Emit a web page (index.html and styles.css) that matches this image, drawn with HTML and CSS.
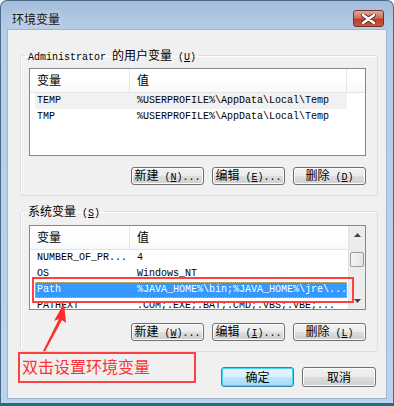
FILE: index.html
```html
<!DOCTYPE html>
<html lang="zh-CN">
<head>
    <meta charset="UTF-8">
    <title>环境变量</title>
    <link rel="stylesheet" href="styles.css">
</head>
<body>
<div class="window">
    <div class="titlebar">
        <span class="title">环境变量</span>
        <span class="close">
            <svg width="15" height="10" viewBox="0 0 15 10"><path d="M2 1 L13 9 M13 1 L2 9" stroke="#5a2a22" stroke-width="4.4" stroke-linecap="round"/><path d="M2 1 L13 9 M13 1 L2 9" stroke="#fff" stroke-width="2.6" stroke-linecap="round"/></svg>
        </span>
    </div>
    <div class="client">
        <fieldset class="group group-user">
            <legend><span class="mono">Administrator </span>的用户变量<span class="mono"> (<u>U</u>)</span></legend>
            <div class="list">
                <div class="list-main">
                    <div class="list-head">
                        <div class="hcell hname">变量</div>
                        <div class="hcell hval">值</div>
                        <div class="hcell hrest"></div>
                    </div>
                    <div class="row hover mono"><span class="cname">TEMP</span><span class="cval">%USERPROFILE%\AppData\Local\Temp</span></div>
                    <div class="row mono"><span class="cname">TMP</span><span class="cval">%USERPROFILE%\AppData\Local\Temp</span></div>
                </div>
            </div>
            <div class="btns">
                <button type="button" class="btn">新建<span class="mono"> (<u>N</u>)...</span></button>
                <button type="button" class="btn">编辑<span class="mono"> (<u>E</u>)...</span></button>
                <button type="button" class="btn">删除<span class="mono"> (<u>D</u>)</span></button>
            </div>
        </fieldset>

        <fieldset class="group group-sys">
            <legend>系统变量<span class="mono"> (<u>S</u>)</span></legend>
            <div class="list list-sys">
                <div class="list-main">
                    <div class="list-head">
                        <div class="hcell hname">变量</div>
                        <div class="hcell hval">值</div>
                    </div>
                    <div class="row mono"><span class="cname">NUMBER_OF_PR...</span><span class="cval">4</span></div>
                    <div class="row mono"><span class="cname">OS</span><span class="cval">Windows_NT</span></div>
                    <div class="row selected mono"><span class="cname">Path</span><span class="cval">%JAVA_HOME%\bin;%JAVA_HOME%\jre\...</span></div>
                    <div class="row mono"><span class="cname">PATHEXT</span><span class="cval">.COM;.EXE;.BAT;.CMD;.VBS;.VBE;...</span></div>
                </div>
                <div class="scrollbar">
                    <div class="sb-btn"><svg width="7" height="4" viewBox="0 0 7 4"><path d="M0 4 L3.5 0 L7 4 Z" fill="#444"/></svg></div>
                    <div class="sb-track"><div class="sb-thumb"></div></div>
                    <div class="sb-btn"><svg width="7" height="4" viewBox="0 0 7 4"><path d="M0 0 L3.5 4 L7 0 Z" fill="#444"/></svg></div>
                </div>
            </div>
            <div class="btns">
                <button type="button" class="btn">新建<span class="mono"> (<u>W</u>)...</span></button>
                <button type="button" class="btn">编辑<span class="mono"> (<u>I</u>)...</span></button>
                <button type="button" class="btn">删除<span class="mono"> (<u>L</u>)</span></button>
            </div>
        </fieldset>

        <div class="dialog-btns">
            <button type="button" class="btn btn-default">确定</button>
            <button type="button" class="btn btn-big">取消</button>
        </div>
    </div>

    <!-- red annotation over the dialog -->
    <div class="mark-row"></div>
    <svg class="arrow" width="40" height="60" viewBox="0 0 40 60">
        <path d="M33 1 L23 19 L28 17 L12 49 L14 49.5 L31 18 L35 21 Z" fill="#ff2d2d"/>
    </svg>
    <div class="note">双击设置环境变量</div>
</div>
</body>
</html>
```

FILE: styles.css
```css
*{
    margin:0;
    padding:0;
}
body{
    background: #fff;
    font-family: "Noto Sans CJK SC", sans-serif;
    font-size: 12px;
    color: #000;
}
.mono{
    font-family: "Liberation Mono", "Noto Sans CJK SC", monospace;
    font-size: 10px;
}
.window{
    position: relative;
    width: 394px;
    height: 406px;
    box-sizing: border-box;
    border: 1px solid #4a6a8c;
    border-bottom: 3px solid #1f6f84;
    border-radius: 7px 7px 0 0;
    background: linear-gradient(#a3bddb, #b6cde8 30px, #bcd3ed);
    padding: 0 7px 5px;
    display: flex;
    flex-direction: column;
}
.titlebar{
    height: 29px;
    flex-shrink: 0;
    display: flex;
    justify-content: space-between;
    align-items: flex-start;
}
.title{
    padding: 11px 0 0 4px;
    line-height: 14px;
    color: #111;
    text-shadow: 0 0 6px #e8f0fa;
}
.close{
    width: 29px;
    height: 15px;
    margin: 9px 2px 0 0;
    border: 1px solid #6e3428;
    border-radius: 3px;
    background: linear-gradient(#e3a89b, #cf6e5c 45%, #b8402d 55%, #c7583f);
    display: flex;
    align-items: center;
    justify-content: center;
}
.client{
    height: 368px;
    flex-shrink: 0;
    overflow: hidden;
    background: #f0f0f0;
    box-shadow: 0 0 0 1px #9fb5cf;
}
.group{
    width: 356px;
    box-sizing: border-box;
    margin-left: 12px;
    border: 1px solid #d5dfe5;
    border-radius: 3px;
    box-shadow: inset 1px 1px 0 #fff;
    padding: 0 11px 10px 8px;
}
.group-user{
    margin-top: 18px;
    padding-top: 6px;
}
.group-sys{
    margin-top: 8px;
    padding-top: 7px;
}
.group legend{
    height: 14px;
    line-height: 14px;
    overflow: visible;
    margin-left: -4px;
    padding: 0 3px;
}
.group legend .mono{
    line-height: 10px;
}
.list{
    width: 337px;
    height: 88px;
    box-sizing: border-box;
    border: 1px solid #828790;
    background: #fff;
    display: flex;
    overflow: hidden;
}
.list-sys{
    height: 85px;
}
.list-main{
    flex: 1;
}
.list-head{
    display: flex;
    height: 23px;
    border-bottom: 1px solid #e5e5e5;
    background: linear-gradient(#fff, #fff 50%, #f7f8fa);
}
.hcell{
    line-height: 22px;
    padding-left: 7px;
    box-sizing: border-box;
    border-right: 1px solid #e5e5e5;
}
.hname{
    width: 100px;
}
.hval{
    width: 217px;
}
.hrest{
    border-right: 0;
    flex: 1;
}
.list-sys .hval{
    width: 218px;
    border-right: 0;
}
.row{
    width: 312px;
    height: 16px;
    line-height: 16px;
    margin-left: 5px;
    box-sizing: border-box;
    white-space: nowrap;
    overflow: hidden;
    display: flex;
}
.cname{
    width: 100px;
    padding-left: 2px;
    box-sizing: border-box;
}
.cval{
    padding-left: 2px;
}
.hover{
    background: #f1f1f1;
}
.selected{
    background: #3399ff;
    color: #fff;
    outline: 1px dotted #d9b36a;
    outline-offset: -1px;
}
.scrollbar{
    width: 17px;
    display: flex;
    flex-direction: column;
    background: #ececec;
    border-left: 1px solid #e2e2e2;
}
.sb-btn{
    height: 17px;
    display: flex;
    align-items: center;
    justify-content: center;
}
.sb-track{
    flex: 1;
    padding: 9px 1px 0;
}
.sb-thumb{
    height: 13px;
    border: 1px solid #9c9c9c;
    border-radius: 2px;
    background: linear-gradient(90deg, #f4f4f4, #e4e4e4);
}
.btns{
    display: flex;
    justify-content: flex-end;
    gap: 8px;
    margin-top: 11px;
}
.group-sys .btns{
    margin-top: 13px;
}
.btn{
    width: 73px;
    height: 18px;
    border: 1px solid #707070;
    border-radius: 3px;
    background: linear-gradient(#f2f2f2, #ebebeb 50%, #dddddd 51%, #cfcfcf);
    box-shadow: inset 0 0 0 1px #fcfcfc;
    font-family: "Noto Sans CJK SC", sans-serif;
    font-size: 12px;
    line-height: 14px;
    color: #000;
    white-space: nowrap;
}
.dialog-btns{
    display: flex;
    justify-content: flex-end;
    gap: 8px;
    margin: 15px 10px 0 0;
}
.dialog-btns .btn{
    height: 20px;
}
.btn-big{
    width: 74px;
}
.btn-default{
    border-color: #3c7fb1;
    background: linear-gradient(#eaf6fd, #d9f0fc 50%, #bee6fd 51%, #a7d9f5);
    box-shadow: inset 0 0 0 1px #48d6f8;
}
.mark-row{
    position: absolute;
    left: 31px;
    top: 276px;
    width: 322px;
    height: 26px;
    box-sizing: border-box;
    border: 2px solid #ff4040;
}
.arrow{
    position: absolute;
    left: 30px;
    top: 301px;
}
.note{
    position: absolute;
    left: 17px;
    top: 351px;
    width: 178px;
    height: 31px;
    box-sizing: border-box;
    border: 2px solid #ff4040;
    color: #ff3030;
    font-size: 16px;
    line-height: 25px;
    padding-left: 2px;
}
```
